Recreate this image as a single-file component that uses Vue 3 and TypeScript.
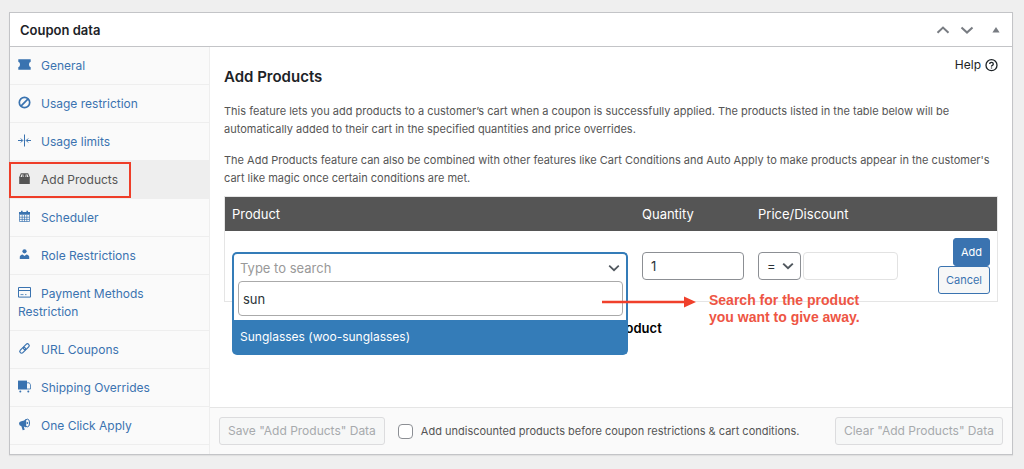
<script setup lang="ts">
import { ref } from 'vue'

interface Tab {
  icon: string
  label: string
  active?: boolean
}

const tabs: Tab[] = [
  { icon: 'ticket', label: 'General' },
  { icon: 'ban', label: 'Usage restriction' },
  { icon: 'limits', label: 'Usage limits' },
  { icon: 'bag', label: 'Add Products', active: true },
  { icon: 'calendar', label: 'Scheduler' },
  { icon: 'user', label: 'Role Restrictions' },
  { icon: 'card', label: 'Payment Methods Restriction' },
  { icon: 'link', label: 'URL Coupons' },
  { icon: 'truck', label: 'Shipping Overrides' },
  { icon: 'megaphone', label: 'One Click Apply' },
]

const search = ref('sun')
const quantity = ref('1')
const operator = ref('=')
const price = ref('')
const addBefore = ref(false)
</script>

<template>
  <section class="panel">
    <header class="panel-head">
      <h1>Coupon data</h1>
      <div class="handles">
        <button type="button" aria-label="Move up">
          <svg width="14" height="14" viewBox="0 0 14 14"><path d="M1.500 9.800 7 4.600l5.500 5.200" fill="none" stroke="#787c82" stroke-width="2" /></svg>
        </button>
        <button type="button" aria-label="Move down">
          <svg width="14" height="14" viewBox="0 0 14 14"><path d="M1.500 4.400 7 9.600l5.500-5.200" fill="none" stroke="#787c82" stroke-width="2" /></svg>
        </button>
        <button type="button" class="toggle" aria-label="Toggle panel">
          <svg width="8" height="14" viewBox="0 0 8 14"><path d="M4 4 7.600 9.500H.4z" fill="#787c82" /></svg>
        </button>
      </div>
    </header>

    <div class="panel-body">
      <nav class="tabs">
        <a v-for="tab in tabs" :key="tab.label" href="#" :class="{ active: tab.active }">
          <svg class="icon" width="13" height="13" viewBox="0 0 13 13" fill="currentColor" aria-hidden="true">
            <path v-if="tab.icon === 'ticket'" d="M.3 1.300h12.400v2.400a2.800 2.800 0 0 0-1.700 2.800 2.800 2.800 0 0 0 1.700 2.800v2.400H.3V9.300A2.800 2.800 0 0 0 2 6.500 2.800 2.800 0 0 0 .3 3.700z" />
            <g v-else-if="tab.icon === 'ban'" fill="none" stroke="currentColor" stroke-width="1.700">
              <circle cx="6.500" cy="6.500" r="5.200" />
              <path d="M2.900 10.100 10.100 2.900" />
            </g>
            <g v-else-if="tab.icon === 'limits'" fill="none" stroke="currentColor" stroke-width="1">
              <path d="M6.500.5v12M0 6.500h4.500M13 6.500H8.500M2.800 4.500l2 2-2 2M10.200 4.500l-2 2 2 2" />
            </g>
            <g v-else-if="tab.icon === 'bag'">
              <path d="M1.200 5h10.600v7H1.200z" />
              <path d="M1.700 5.500 3.200 1.700h6.600l1.500 3.800M4.700 5.500l.6-3.800M8.300 5.500l-.6-3.800M6.500 5.500V1.700" fill="none" stroke="currentColor" stroke-width="1.100" />
            </g>
            <g v-else-if="tab.icon === 'calendar'">
              <path d="M1 2h11v2.800H1zM3 .7h1.600V3H3zM8.400.7H10V3H8.400z" />
              <path d="M1.500 5v6.500h10V5M4.200 5v6.500M6.500 5v6.500M8.800 5v6.500M1.500 7.200h10M1.500 9.400h10" fill="none" stroke="currentColor" stroke-width=".7" />
            </g>
            <g v-else-if="tab.icon === 'user'">
              <circle cx="6.500" cy="3.300" r="2.100" />
              <path d="M1.800 11V8.600Q2.200 6.700 4.600 6.400L6.500 8l1.900-1.600Q10.800 6.700 11.200 8.600V11z" />
            </g>
            <g v-else-if="tab.icon === 'card'" fill="none" stroke="currentColor">
              <path d="M.5 1.500h12v9.600H.5zM.5 4.500h12" />
              <path d="M2.500 8.600h3M7 8.600h1.500" stroke-width=".8" />
            </g>
            <g v-else-if="tab.icon === 'link'" fill="none" stroke="currentColor" stroke-width="1.200" transform="rotate(-45 6.500 6.500)">
              <rect x=".6" y="4.700" width="6.800" height="3.600" rx="1.800" />
              <rect x="5.600" y="4.700" width="6.800" height="3.600" rx="1.800" />
            </g>
            <g v-else-if="tab.icon === 'truck'">
              <path d="M0 .6h9v8.900H0z" />
              <path d="M9 2.800h2.300l1.200 2v4.200H9" fill="none" stroke="currentColor" stroke-width=".8" />
              <circle cx="2.300" cy="11.400" r="1" />
              <circle cx="10.300" cy="11.400" r="1" />
            </g>
            <g v-else>
              <path d="M8.200.8v8.600L5.800 8.500l.9 3.300-2 .5L3.400 8.200Q1 7.800 1 5.600T3.300 3.300Q6.500 3 8.200.8z" />
              <ellipse cx="9.300" cy="5" rx="2.300" ry="3.900" fill="none" stroke="currentColor" />
              <circle cx="9.400" cy="5" r=".9" />
            </g>
          </svg>{{ tab.label }}
          <span v-if="tab.active" class="highlight"></span>
        </a>
      </nav>

      <div class="content">
        <div class="main">
          <a class="help" href="#">
            Help
            <svg width="13" height="13" viewBox="0 0 13 13" fill="none" stroke="currentColor" aria-hidden="true">
              <circle cx="6.500" cy="6.200" r="5.500" stroke-width="1.300" />
              <path d="M4.700 5Q4.700 3.300 6.500 3.300T8.300 4.900Q8.300 5.800 7.300 6.300T6.500 7.600M6.500 8.400v1.200" stroke-width="1.300" />
            </svg>
          </a>
          <h2>Add Products</h2>
          <p>This feature lets you add products to a customer’s cart when a coupon is successfully applied. The products listed in the table below will be automatically added to their cart in the specified quantities and price overrides.</p>
          <p>The Add Products feature can also be combined with other features like Cart Conditions and Auto Apply to make products appear in the customer's cart like magic once certain conditions are met.</p>

          <div class="table-area">
            <table>
              <thead>
                <tr>
                  <th>Product</th>
                  <th class="col-quantity">Quantity</th>
                  <th class="col-price">Price/Discount</th>
                  <th class="col-actions" aria-label="Actions"></th>
                </tr>
              </thead>
              <tbody>
                <tr>
                  <td>
                    <div class="combo">
                      <button type="button" class="combo-value" aria-expanded="true">
                        Type to search
                        <svg width="12" height="12" viewBox="0 0 12 12" aria-hidden="true"><path d="m1.200 3.600 4.800 4.600 4.800-4.600" fill="none" stroke="#50575e" stroke-width="1.700" /></svg>
                      </button>
                      <div class="combo-menu">
                        <input v-model="search" type="text" aria-label="Search products" />
                        <ul role="listbox" aria-label="Products">
                          <li role="option" aria-selected="true">Sunglasses (woo-sunglasses)</li>
                        </ul>
                      </div>
                    </div>
                  </td>
                  <td><input v-model="quantity" class="quantity" type="text" aria-label="Quantity" /></td>
                  <td>
                    <div class="price">
                      <span class="operator">
                        <select v-model="operator" aria-label="Price type">
                          <option>=</option>
                          <option>-</option>
                          <option>%</option>
                        </select>
                        <svg width="12" height="12" viewBox="0 0 12 12" aria-hidden="true"><path d="m1.200 3.600 4.800 4.600 4.800-4.600" fill="none" stroke="#50575e" stroke-width="2" /></svg>
                      </span>
                      <input v-model="price" type="text" aria-label="Price" />
                    </div>
                  </td>
                  <td>
                    <div class="actions">
                      <button type="button" class="btn primary">Add</button>
                      <button type="button" class="btn">Cancel</button>
                    </div>
                  </td>
                </tr>
              </tbody>
            </table>
            <button type="button" class="add-product">Add the product</button>
            <div class="callout">
              <svg width="94" height="12" viewBox="0 0 94 12" aria-hidden="true"><path d="M0 4.800h82V.5L94 6 82 11.500V7.200H0z" fill="#f0402b" /></svg>
              <strong>Search for the product<br />you want to give away.</strong>
            </div>
          </div>
        </div>

        <footer>
          <button type="button" class="btn" disabled>Save "Add Products" Data</button>
          <label><input v-model="addBefore" type="checkbox" />Add undiscounted products before coupon restrictions &amp; cart conditions.</label>
          <button type="button" class="btn last" disabled>Clear "Add Products" Data</button>
        </footer>
      </div>
    </div>
  </section>
</template>

<style>
body {
  background: #efefef;
}
</style>

<style scoped>
* {
  box-sizing: border-box;
}
.panel {
  margin: 12px 11px 14px 9px;
  border: 1px solid #c3c4c7;
  background: #fff;
  box-shadow: 0 1px 1px rgba(0, 0, 0, 0.06);
  color: #50575e;
  font-family: Inter, "Liberation Sans", sans-serif;
  font-size: 12px;
  line-height: 18px;
}
button,
input,
select {
  margin: 0;
  color: inherit;
  font: inherit;
}
button {
  cursor: pointer;
}
.panel-head {
  display: flex;
  align-items: center;
  justify-content: space-between;
  height: 34px;
  padding: 0 12px 0 10px;
  border-bottom: 1px solid #c3c4c7;
}
h1 {
  margin: 0;
  color: #1d2327;
  font-size: 13px;
  font-weight: 600;
}
.handles {
  display: flex;
  gap: 10px;
}
.handles button {
  display: flex;
  padding: 0;
  border: 0;
  background: none;
}
.handles .toggle {
  margin-left: 8px;
}
.panel-body {
  display: flex;
}
.tabs {
  flex: none;
  width: 200px;
  padding-bottom: 9px;
  border-right: 1px solid #eee;
  background: #fafafa;
}
.tabs a {
  display: block;
  position: relative;
  padding: 10px 8px 9px;
  border-bottom: 1px solid #eee;
  color: #3a73b0;
  text-decoration: none;
}
.tabs a.active {
  background: #eee;
  color: #555;
}
.icon {
  margin-right: 10px;
  vertical-align: -1px;
}
.highlight {
  position: absolute;
  inset: 1px 78px 0 -1px;
  border: 2px solid #ee3d28;
}
.content {
  display: flex;
  flex: 1;
  flex-direction: column;
  min-width: 0;
}
.main {
  flex: 1;
  padding: 9px 14px 0;
}
.help {
  display: flex;
  float: right;
  align-items: center;
  gap: 4px;
  color: #1d2327;
  text-decoration: none;
}
h2 {
  margin: 0;
  padding-top: 11px;
  color: #1d2327;
  font-size: 15px;
  font-weight: 600;
  line-height: 20px;
}
p {
  margin: 15px 0 13px;
  color: #555;
  font-size: 11px;
  line-height: 18px;
}
p + p {
  margin: 13px 0 9px;
}
.table-area {
  position: relative;
}
table {
  width: 100%;
  border: 1px solid #e5e5e5;
  border-spacing: 0;
  table-layout: fixed;
}
th {
  height: 34px;
  padding: 0 7px;
  background: #555;
  color: #fff;
  font-size: 13px;
  font-weight: 400;
  text-align: left;
}
.col-quantity {
  width: 116px;
}
.col-price {
  width: 154px;
}
.col-actions {
  width: 92px;
}
td {
  height: 70px;
  padding: 7px;
}
td input,
td select {
  height: 28px;
  padding: 0 8px;
  border: 1px solid #8c8f94;
  border-radius: 4px;
  background: #fff;
  color: #2c3338;
  font-size: 13px;
}
.combo {
  position: relative;
}
.combo-value {
  display: flex;
  align-items: center;
  justify-content: space-between;
  width: 100%;
  height: 28px;
  padding: 1px 6px 0;
  border: 2px solid #347cb8;
  border-bottom: 0;
  border-radius: 5px 5px 0 0;
  background: #fff;
  color: #999;
  font-size: 13px;
}
.combo-menu {
  position: absolute;
  z-index: 1;
  top: 28px;
  right: 0;
  left: 0;
  padding-top: 1px;
  border: 2px solid #347cb8;
  border-top: 0;
  border-radius: 0 0 5px 5px;
  background: #fff;
}
.combo-menu input {
  display: block;
  width: calc(100% - 7px);
  height: 35px;
  margin: 0 3px 4px 4px;
  padding: 0 4px;
  border-color: #aaa;
}
.combo-menu ul {
  margin: 0;
  padding: 0;
  list-style: none;
}
.combo-menu li {
  padding: 8px 6px 7px;
  background: #347cb8;
  color: #fff;
}
td .quantity {
  display: block;
  width: 100%;
}
.price {
  display: flex;
  gap: 2px;
}
.price input {
  width: 95px;
  border-color: #e2e2e2;
}
.operator {
  position: relative;
}
.operator select {
  width: 43px;
  appearance: none;
}
.operator svg {
  position: absolute;
  top: 8px;
  right: 7px;
  pointer-events: none;
}
.actions {
  display: flex;
  flex-direction: column;
  align-items: flex-end;
}
.btn {
  height: 28px;
  padding: 0 8px;
  border: 1px solid #3a73b0;
  border-radius: 3px;
  background: #f6f7f7;
  color: #3a73b0;
  font-size: 11px;
  white-space: nowrap;
}
.actions .btn {
  padding: 0 7px;
}
.btn.primary {
  background: #3a73b0;
  color: #fff;
}
.add-product {
  display: block;
  margin: 17px auto 0;
  padding: 0;
  border: 0;
  background: none;
  color: #000;
  font-size: 13px;
  font-weight: 600;
}
.callout {
  display: flex;
  position: absolute;
  z-index: 2;
  top: 96px;
  left: 378px;
  gap: 13px;
  color: #ee5544;
  font-family: "Liberation Sans", sans-serif;
  font-size: 14px;
  line-height: 17px;
}
.callout svg {
  margin-top: 4px;
}
footer {
  display: flex;
  align-items: center;
  height: 47px;
  padding: 0 9px;
  border-top: 1px solid #e5e5e5;
  background: #fafafa;
}
footer .btn {
  border-color: #dcdcde;
  color: #a7aaad;
  font-size: 12px;
}
footer .last {
  margin-left: auto;
}
label {
  display: flex;
  align-items: center;
  gap: 8px;
  margin-left: 13px;
  color: #555;
  font-size: 11px;
}
label input {
  width: 15px;
  height: 15px;
  border: 1px solid #8c8f94;
  border-radius: 4px;
  background: #fff;
  appearance: none;
}
label input:checked {
  background: #3a73b0;
}
</style>
